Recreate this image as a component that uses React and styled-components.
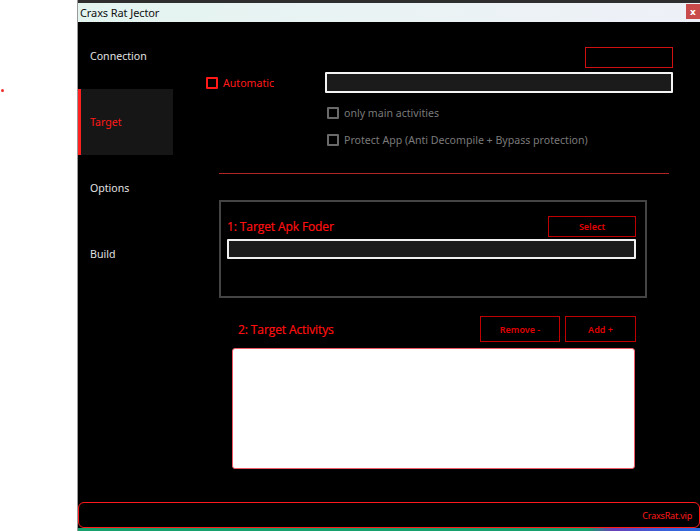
import React from "react";
import styled, { createGlobalStyle } from "styled-components";

const Global = createGlobalStyle`
  html, body { margin: 0; padding: 0; background: #fff; }
  body { font-family: "Noto Sans", "Open Sans", sans-serif; overflow: hidden; }
  * { box-sizing: border-box; }
`;

const Page = styled.div`
  display: flex;
  width: 700px;
  height: 531px;
`;

const Desktop = styled.div`
  position: relative;
  width: 78px;
  flex: none;
  background: #fff;
  border-right: 1px solid #9a9a9a;
`;

const Dot = styled.span`
  position: absolute;
  left: 1px;
  top: 89px;
  width: 3px;
  height: 3px;
  border-radius: 50%;
  background: #f03030;
`;

const Window = styled.div`
  flex: 1;
  display: flex;
  flex-direction: column;
  background: #000;
`;

const TitleBar = styled.div`
  height: 22px;
  flex: none;
  border-top: 3px solid #2e2e2e;
  background: linear-gradient(90deg, #e3f4ef 0%, #eaf3f4 50%, #eef0f8 100%);
  display: flex;
  align-items: center;
  justify-content: space-between;
  padding-left: 2px;
`;

const Title = styled.span`
  font-family: "Noto Sans", sans-serif;
  font-size: 11px;
  color: #111;
  letter-spacing: -0.1px;
`;

const CloseBtn = styled.span`
  width: 14px;
  height: 15px;
  background: #c84a4a;
  color: #fff;
  font-family: "DejaVu Sans", sans-serif;
  font-size: 9px;
  font-weight: bold;
  display: flex;
  align-items: center;
  justify-content: center;
  margin-top: -2px;
`;

const Main = styled.div`
  flex: 1;
  display: flex;
  min-height: 0;
`;

const Sidebar = styled.nav`
  width: 95px;
  flex: none;
  padding-top: 1px;
  display: flex;
  flex-direction: column;
`;

const NavItem = styled.div`
  height: 66px;
  display: flex;
  align-items: center;
  padding-left: ${p => (p.$active ? "9px" : "12px")};
  font-size: 10.6px;
  color: ${p => (p.$active ? "#ff1a1a" : "#e2e2e2")};
  background: ${p => (p.$active ? "#161616" : "transparent")};
  border-left: ${p => (p.$active ? "3px solid #ff2020" : "none")};
`;

const Content = styled.div`
  flex: 1;
  display: flex;
  flex-direction: column;
`;

const TopBox = styled.div`
  align-self: flex-end;
  margin: 25px 27px 0 0;
  width: 88px;
  height: 21px;
  border: 1px solid #d01010;
`;

const AutoRow = styled.div`
  margin-top: 4px;
  display: flex;
  align-items: center;
  height: 21px;
  padding-left: 33px;
`;

const CheckLabel = styled.label`
  display: flex;
  align-items: center;
  gap: 5px;
  font-size: 10.6px;
  color: ${p => p.$color};
  white-space: nowrap;
`;

const Box = styled.span`
  width: 12px;
  height: 12px;
  flex: none;
  border: 2px solid ${p => p.$color};
  border-radius: 1px;
`;

const TextInput = styled.div`
  margin-left: auto;
  margin-right: 27px;
  width: 348px;
  height: 21px;
  border: 2px solid #f4f4f4;
  border-radius: 1px;
  background: #1b1b1b;
`;

const OptionRow = styled.div`
  margin-top: ${p => p.$mt}px;
  padding-left: 154px;
  height: 12px;
  display: flex;
  align-items: center;
`;

const Divider = styled.div`
  margin: 27px 0 0 46px;
  width: 450px;
  height: 1px;
  background: #b02424;
`;

const Group = styled.div`
  margin: 26px 0 0 46px;
  width: 428px;
  height: 98px;
  border: 2px solid #444;
  padding: 14px 9px 0 6px;
  display: flex;
  flex-direction: column;
  gap: 2px;
`;

const GroupHead = styled.div`
  display: flex;
  align-items: center;
  justify-content: space-between;
`;

const Heading = styled.span`
  font-family: "Open Sans", sans-serif;
  font-size: 12px;
  color: #ff1010;
  letter-spacing: -0.1px;
  -webkit-text-stroke: 0.2px #ff1010;
`;

const RedButton = styled.div`
  width: ${p => p.$w}px;
  height: ${p => p.$h}px;
  border: 1.5px solid #c00000;
  display: flex;
  align-items: center;
  justify-content: center;
  font-size: 9px;
  font-weight: 600;
  color: #e00000;
`;

const FolderInput = styled.div`
  height: 20px;
  border: 2px solid #f0f0f0;
  border-radius: 1px;
  background: #1b1b1b;
`;

const ActHead = styled.div`
  margin: 18px 0 0 65px;
  width: 398px;
  display: flex;
  align-items: center;
  gap: 5px;
`;

const ActLabel = styled(Heading)`
  margin-right: auto;
`;

const ListBox = styled.div`
  margin: 6px 0 0 59px;
  width: 403px;
  height: 121px;
  background: #fff;
  border: 1px solid #ef5a66;
  border-radius: 3px;
`;

const Footer = styled.div`
  height: 26px;
  flex: none;
  border: 1px solid #ff1a1a;
  border-radius: 6px;
  display: flex;
  align-items: center;
  justify-content: flex-end;
  padding-right: 7px;
  font-size: 9px;
  letter-spacing: -0.2px;
  color: #ff1a1a;
`;

const Strip = styled.div`
  height: 3px;
  flex: none;
  background: linear-gradient(90deg, #17a06b 0%, #17a06b 82%, #6a3fb8 86%, #3a5fd8 94%, #2e6ae0 100%);
`;

export default function App() {
  return (
    <>
      <Global />
      <Page>
        <Desktop>
          <Dot />
        </Desktop>
        <Window>
          <TitleBar>
            <Title>Craxs Rat Jector</Title>
            <CloseBtn>x</CloseBtn>
          </TitleBar>
          <Main>
            <Sidebar>
              <NavItem>Connection</NavItem>
              <NavItem $active>Target</NavItem>
              <NavItem>Options</NavItem>
              <NavItem>Build</NavItem>
            </Sidebar>
            <Content>
              <TopBox />
              <AutoRow>
                <CheckLabel $color="#ff1a1a">
                  <Box $color="#ff1a1a" />
                  Automatic
                </CheckLabel>
                <TextInput />
              </AutoRow>
              <OptionRow $mt={14}>
                <CheckLabel $color="#7a7a7a">
                  <Box $color="#6a6a6a" />
                  only main activities
                </CheckLabel>
              </OptionRow>
              <OptionRow $mt={15}>
                <CheckLabel $color="#7a7a7a">
                  <Box $color="#6a6a6a" />
                  Protect App (Anti Decompile + Bypass protection)
                </CheckLabel>
              </OptionRow>
              <Divider />
              <Group>
                <GroupHead>
                  <Heading>1: Target Apk Foder</Heading>
                  <RedButton $w={88} $h={21}>Select</RedButton>
                </GroupHead>
                <FolderInput />
              </Group>
              <ActHead>
                <ActLabel>2: Target Activitys</ActLabel>
                <RedButton $w={80} $h={26}>Remove -</RedButton>
                <RedButton $w={71} $h={26}>Add +</RedButton>
              </ActHead>
              <ListBox />
            </Content>
          </Main>
          <Footer>CraxsRat.vip</Footer>
          <Strip />
        </Window>
      </Page>
    </>
  );
}
